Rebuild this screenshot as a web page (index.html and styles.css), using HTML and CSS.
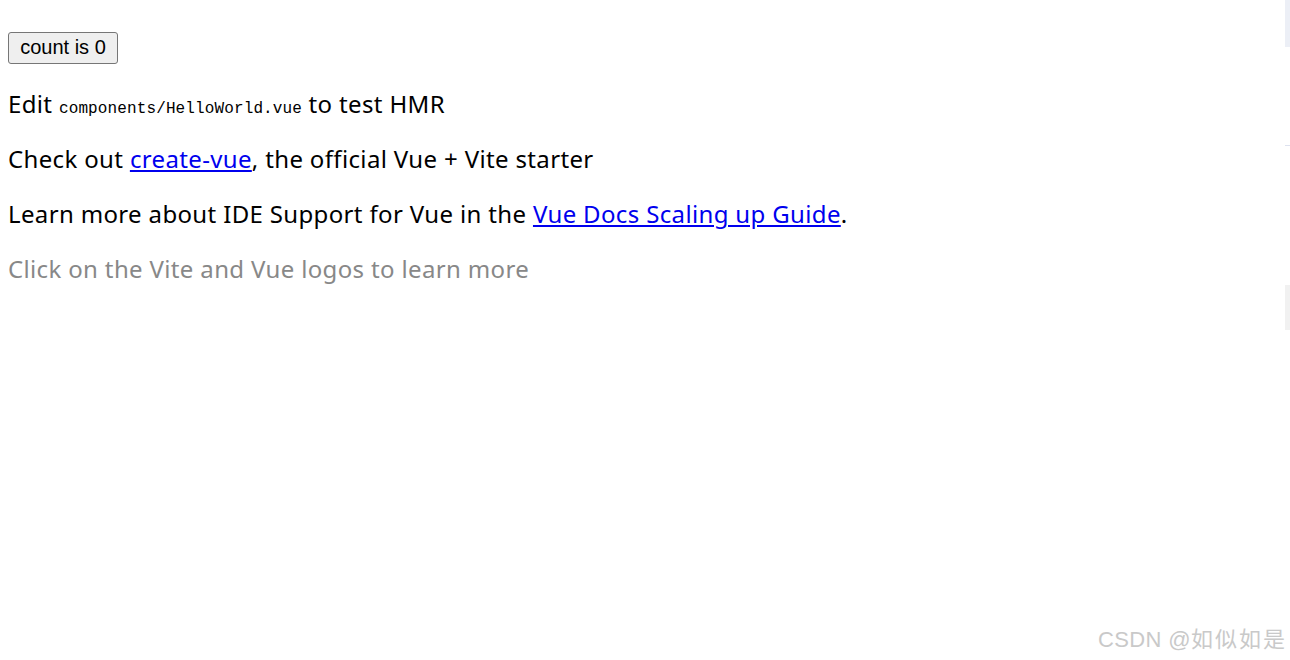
FILE: index.html
```html
<!DOCTYPE html>
<html lang="en">
<head>
<meta charset="utf-8">
<title>Vite + Vue</title>
<link rel="stylesheet" href="styles.css">
</head>
<body>
<div class="app">
  <div class="card">
    <button type="button" class="count-btn">count is 0</button>
    <p>Edit <code>components/HelloWorld.vue</code> to test HMR</p>
  </div>
  <p>Check out <a href="#">create-vue</a>, the official Vue + Vite starter</p>
  <p>Learn more about IDE Support for Vue in the <a href="#">Vue Docs Scaling up Guide</a>.</p>
  <p class="read-the-docs">Click on the Vite and Vue logos to learn more</p>
</div>
<div class="edge edge-top"></div>
<div class="edge edge-line"></div>
<div class="edge edge-mid"></div>
<div class="watermark">CSDN @<span class="wm-cjk">如似如是</span></div>
</body>
</html>
```
FILE: styles.css
```css
html, body {
  margin: 0;
  background: #ffffff;
}
body {
  font-family: "Noto Sans", "Open Sans", sans-serif;
  font-size: 24px;
  letter-spacing: 0.35px;
  color: #000;
}
.app {
  padding: 32px 8px 0;
}
.count-btn {
  display: block;
  width: 110px;
  height: 32px;
  padding: 0 0 2px;
  font-family: "Liberation Sans", Arial, sans-serif;
  font-size: 20px;
  letter-spacing: 0;
  color: #000;
  background: #efefef;
  border: 1px solid #767676;
  border-radius: 3px;
}
p {
  margin: 24px 0 0;
  line-height: 31px;
}
code {
  font-family: "Liberation Mono", monospace;
  font-size: 16px;
  letter-spacing: 0.12px;
  line-height: 1;
}
a {
  color: #0000ee;
  text-decoration: underline;
}
.read-the-docs {
  color: #888888;
}
.edge {
  position: absolute;
  right: 0;
  width: 5px;
}
.edge-top { top: 0; height: 47px; background: #eceff6; }
.edge-line { top: 145px; height: 1px; background: #dde2ef; }
.edge-mid { top: 285px; height: 45px; background: #f1f1f1; }
.watermark {
  position: absolute;
  right: 5px;
  top: 623px;
  font-family: "Liberation Sans", "Noto Sans CJK SC", sans-serif;
  font-size: 22px;
  line-height: 28px;
  color: #c9c9c9;
  white-space: nowrap;
}
.wm-cjk {
  font-family: "Noto Sans CJK SC", sans-serif;
  letter-spacing: 2px;
  margin-right: -2px;
}
```
